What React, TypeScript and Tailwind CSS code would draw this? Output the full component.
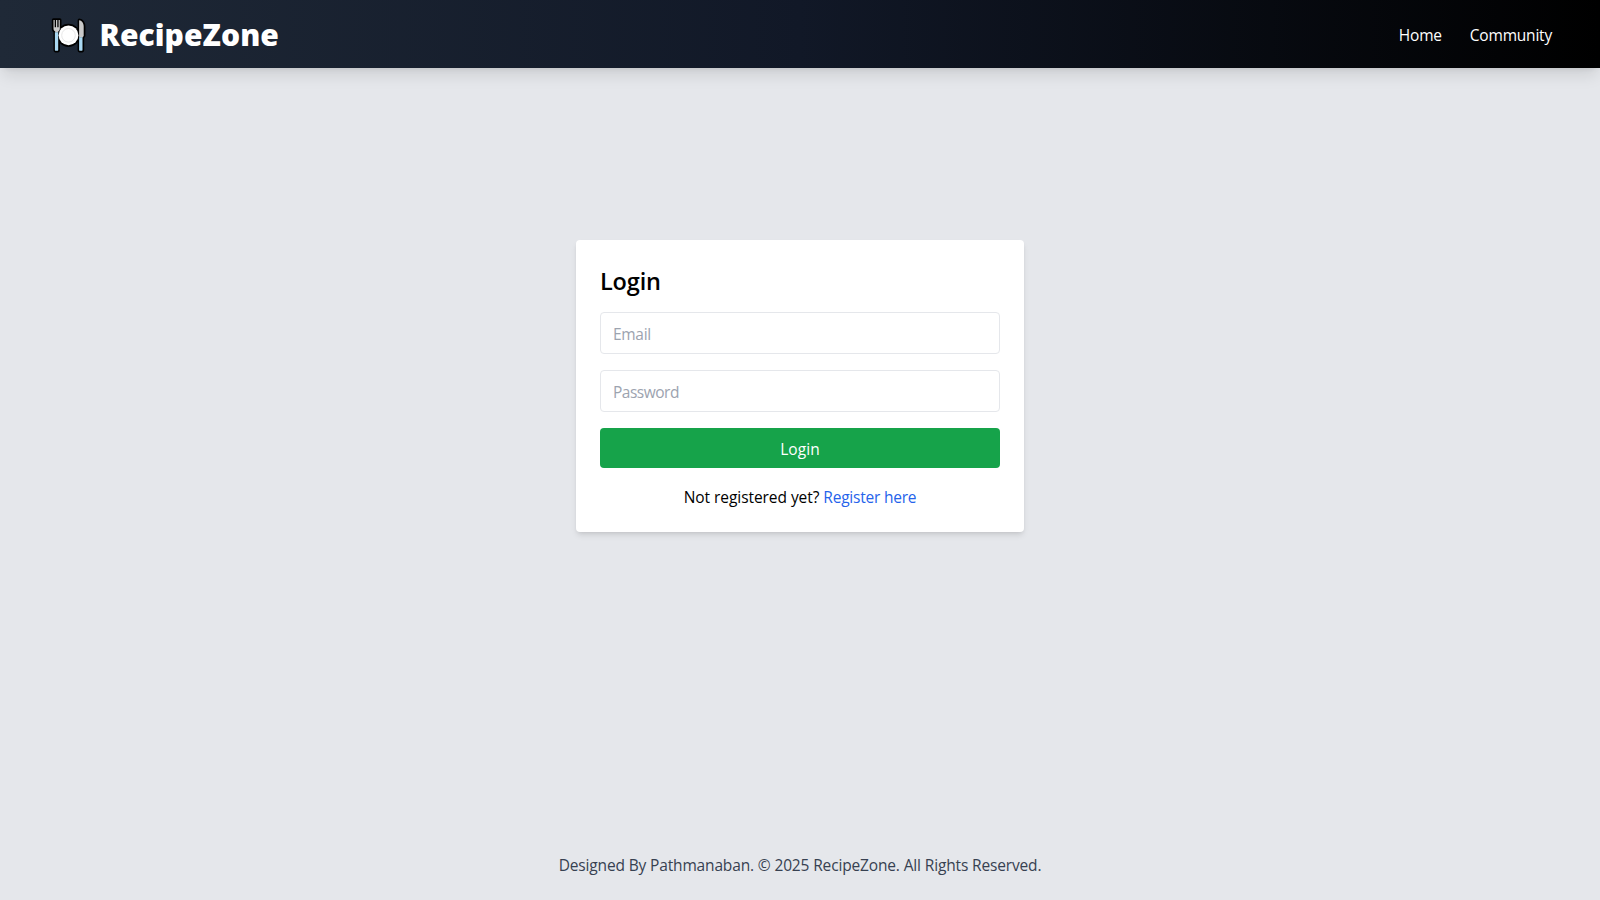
function DinnerPlate() {
  return (
    <svg className="mt-0.5 h-9 w-[35px] shrink-0" viewBox="51 17 35 36" fill="none" aria-hidden="true">
      <g stroke="#000" strokeWidth="3.4" strokeLinejoin="round" strokeLinecap="round" fill="#000">
        <path d="M53.500 20v8.600c0 1.700 1 2.600 1.700 2.900v18.400c0 1.200 3 1.200 3 0V31.500c.8-.3 1.600-1.200 1.600-2.900V20z" />
        <circle cx="68.500" cy="35.300" r="9.900" />
        <path d="M79.300 20.200c2.600 0 4.400 3 4.400 6.400V36h-1.200v13.900c0 1.200-3.200 1.200-3.200 0z" />
      </g>
      <circle cx="68.500" cy="35.300" r="9.900" fill="#fff" />
      <circle cx="68.500" cy="35.300" r="6.800" stroke="#e8e8e8" strokeWidth="1" />
      <path
        d="M53.500 20h1.200v7.200h1.300V20h1.300v7.200h1.300V20h1.200v8.600c0 1.700-.8 2.600-1.600 2.900v1h-3v-1c-.7-.3-1.700-1.200-1.700-2.900z"
        fill="#c9c9c9"
      />
      <path d="M54.900 32.200h3.300v17.700c0 1.200-3.300 1.200-3.300 0z" fill="#a9d8f2" />
      <path d="M79.100 20.200c2.800 0 4.600 3 4.600 6.400V36l-1.200 1.500h-3.400z" fill="#c9c9c9" />
      <path d="M79.100 37.300h3.400v12.600c0 1.200-3.400 1.200-3.400 0z" fill="#a9d8f2" />
    </svg>
  );
}

function Header() {
  return (
    <header className="relative flex h-[68px] items-center justify-between bg-linear-to-r/srgb from-[#1f2937] via-[#111827] to-black px-12 text-white shadow-lg">
      <a href="#" className="flex items-center gap-[13.5px] pl-[3px]">
        <DinnerPlate />
        <span className="pt-0.5 text-3xl font-extrabold leading-9 tracking-[0.08px]">RecipeZone</span>
      </a>
      <nav className="flex gap-7 pt-0.5 leading-6">
        <a href="#" className="tracking-[-0.2px]">Home</a>
        <a href="#" className="tracking-[-0.2px]">Community</a>
      </nav>
    </header>
  );
}

const fieldClass =
  "mb-4 block h-[42px] w-full rounded border border-[#e5e7eb] bg-white px-3 pt-[9px] pb-[7px] leading-6 placeholder:text-[#9ca3af] outline-none";

function LoginCard() {
  return (
    <form className="h-[292px] w-[448px] rounded bg-white p-6 shadow-md">
      <h2 className="mb-[15px] pt-px text-[23.5px] font-semibold leading-8 tracking-[-0.15px]">Login</h2>
      <input type="email" placeholder="Email" className={`${fieldClass} tracking-[-0.3px]`} />
      <input type="password" placeholder="Password" className={`${fieldClass} tracking-[-0.5px]`} />
      <button type="button" className="block h-10 w-full rounded bg-[#16a34a] pt-[9px] pb-[7px] leading-6 tracking-[0.1px] text-white">
        Login
      </button>
      <p className="mt-[17px] text-center leading-6 tracking-[-0.06px]">
        Not registered yet?{" "}
        <a href="#" className="tracking-[-0.22px] text-[#2563eb]">
          Register here
        </a>
      </p>
    </form>
  );
}

export default function App() {
  return (
    <div className="flex h-screen flex-col bg-[#e5e7eb] font-['Open_Sans',sans-serif] text-[15.5px] leading-6 tracking-[-0.15px] text-black">
      <Header />
      <main className="flex flex-1 items-start justify-center pt-[172px]">
        <LoginCard />
      </main>
      <footer className="pb-[23px] text-center text-[#374151]">
        Designed By Pathmanaban. © 2025 RecipeZone. All Rights Reserved.
      </footer>
    </div>
  );
}
